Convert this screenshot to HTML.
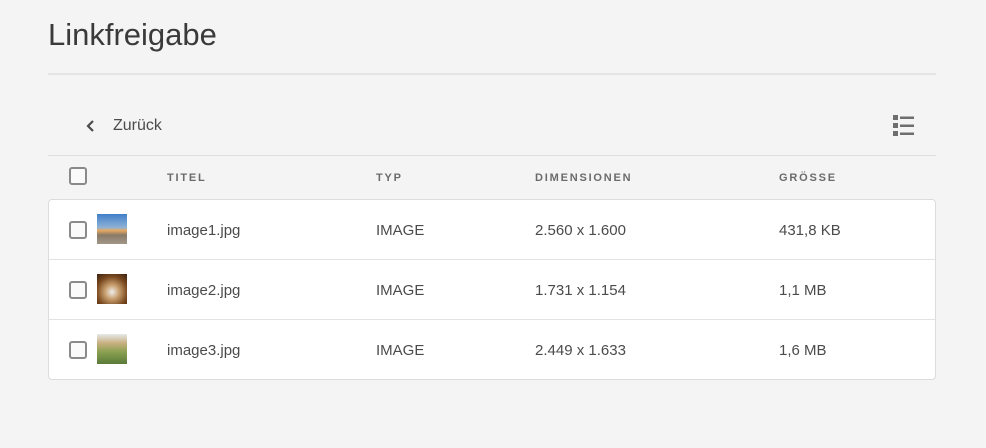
<!DOCTYPE html>
<html><head><meta charset="utf-8"><style>
*{margin:0;padding:0;box-sizing:border-box}
body{width:986px;height:448px;background:#f4f4f4;font-family:"Liberation Sans",sans-serif;color:#4b4b4b;position:relative;overflow:hidden}
.abs{position:absolute}
h1{position:absolute;left:48px;top:17px;font-size:31px;font-weight:300;color:#3a3a3a;letter-spacing:0px}
.hr{position:absolute;left:48px;width:888px;height:2px;background:#e4e4e4}
.cb{position:absolute;width:18px;height:18px;border:2px solid #8a8a8a;border-radius:3px;background:#fafafa}
.th{position:absolute;top:172px;font-size:11px;font-weight:bold;letter-spacing:1.8px;color:#6b6b6b}
.box{position:absolute;left:48px;top:199px;width:888px;height:181px;background:#fff;border:1px solid #dcdcdc;border-radius:4px}
.row{position:absolute;left:0;width:886px;height:60px;border-bottom:1px solid #e3e3e3}
.row span{position:absolute;top:22px;font-size:15px;color:#4b4b4b}
.th1{position:absolute;left:48px;top:14px;width:30px;height:30px}
</style></head><body>
<h1>Linkfreigabe</h1>
<div class="hr" style="top:73px"></div>
<svg class="abs" style="left:86px;top:119px" width="10" height="14"><path d="M7 2 L2 7 L7 12" stroke="#4b4b4b" stroke-width="2.2" fill="none"/></svg>
<div class="abs" style="left:113px;top:117px;font-size:16px;color:#4b4b4b">Zurück</div>
<svg class="abs" style="left:893px;top:115px" width="22" height="21"><g fill="#6e6e6e"><rect x="0" y="0" width="5" height="5"/><rect x="0" y="8" width="5" height="5"/><rect x="0" y="16" width="5" height="5"/><rect x="7" y="1.5" width="14" height="2.5"/><rect x="7" y="9.5" width="14" height="2.5"/><rect x="7" y="17.5" width="14" height="2.5"/></g></svg>
<div class="hr" style="top:155px;height:1px;background:#dedede"></div>
<div class="cb" style="left:69px;top:167px"></div>
<div class="th" style="left:167px">TITEL</div>
<div class="th" style="left:376px">TYP</div>
<div class="th" style="left:535px">DIMENSIONEN</div>
<div class="th" style="left:779px">GRÖSSE</div>
<div class="box">
<div class="row" style="top:0">
<div class="cb" style="left:20px;top:21px"></div>
<div class="th1" style="background:linear-gradient(#3f7fc8 0%,#8fb2d6 45%,#e8a860 55%,#8a7a68 70%,#a29888 100%)"></div>
<span style="left:118px">image1.jpg</span><span style="left:327px">IMAGE</span><span style="left:486px">2.560 x 1.600</span><span style="left:730px">431,8 KB</span></div>
<div class="row" style="top:60px">
<div class="cb" style="left:20px;top:21px"></div>
<div class="th1" style="background:radial-gradient(circle at 50% 60%,#eee 0%,#c9a070 30%,#7a4a20 65%,#3a200c 100%)"></div>
<span style="left:118px">image2.jpg</span><span style="left:327px">IMAGE</span><span style="left:486px">1.731 x 1.154</span><span style="left:730px">1,1 MB</span></div>
<div class="row" style="top:120px;border-bottom:none">
<div class="cb" style="left:20px;top:21px"></div>
<div class="th1" style="background:linear-gradient(#e6e9ea 0%,#c8b080 30%,#8aa050 60%,#5a7a3a 100%)"></div>
<span style="left:118px">image3.jpg</span><span style="left:327px">IMAGE</span><span style="left:486px">2.449 x 1.633</span><span style="left:730px">1,6 MB</span></div>
</div>
</body></html>
